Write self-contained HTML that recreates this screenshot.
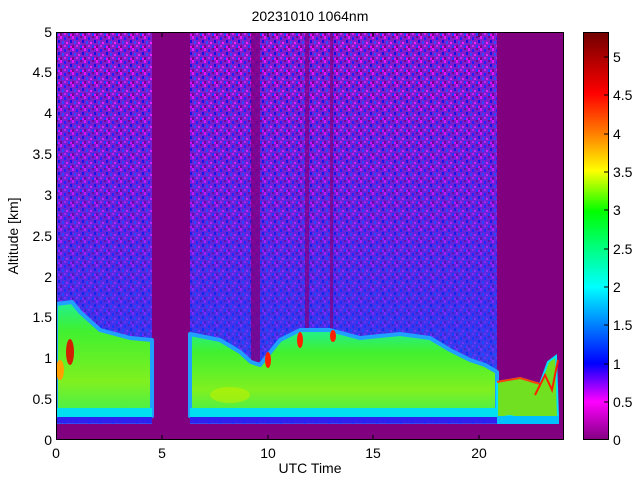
<!DOCTYPE html>
<html><head><style>
html,body{margin:0;padding:0;background:#fff;width:640px;height:480px;overflow:hidden}
</style></head><body>
<svg width="640" height="480" xmlns="http://www.w3.org/2000/svg" font-family="Liberation Sans, sans-serif">
<defs>
<pattern id="nz" width="12" height="12" patternUnits="userSpaceOnUse">
<rect width="12" height="12" fill="#8a1ec8"/>
<rect x="0" y="0" width="2" height="3" fill="#ff10ff"/>
<rect x="4" y="1" width="2" height="3" fill="#2020ff"/>
<rect x="8" y="0" width="2" height="2" fill="#800080"/>
<rect x="2" y="5" width="2" height="3" fill="#3050ff"/>
<rect x="6" y="6" width="2" height="2" fill="#ff20ff"/>
<rect x="10" y="4" width="2" height="3" fill="#1010e0"/>
<rect x="0" y="9" width="2" height="3" fill="#800080"/>
<rect x="4" y="9" width="2" height="2" fill="#e020f0"/>
<rect x="8" y="9" width="2" height="3" fill="#2040ff"/>
<rect x="10" y="10" width="2" height="2" fill="#ff00ff"/>
</pattern>
<linearGradient id="bl" x1="0" y1="0" x2="0" y2="1">
<stop offset="0" stop-color="#2020ff" stop-opacity="0.05"/>
<stop offset="0.45" stop-color="#2030ff" stop-opacity="0.3"/>
<stop offset="0.75" stop-color="#1040ff" stop-opacity="0.6"/>
<stop offset="1" stop-color="#1060ff" stop-opacity="0.7"/>
</linearGradient>
<linearGradient id="cl" x1="0" y1="0" x2="0" y2="1">
<stop offset="0" stop-color="#20f090"/>
<stop offset="0.25" stop-color="#40f030"/>
<stop offset="0.7" stop-color="#80f020"/>
<stop offset="1" stop-color="#40f050"/>
</linearGradient>
<linearGradient id="cb" x1="0" y1="1" x2="0" y2="0">
<stop offset="0" stop-color="#800080"/>
<stop offset="0.094" stop-color="#ff00ff"/>
<stop offset="0.188" stop-color="#0000ff"/>
<stop offset="0.375" stop-color="#00ffff"/>
<stop offset="0.47" stop-color="#00ff80"/>
<stop offset="0.56" stop-color="#00ff00"/>
<stop offset="0.66" stop-color="#ffff00"/>
<stop offset="0.75" stop-color="#ff8000"/>
<stop offset="0.85" stop-color="#ff0000"/>
<stop offset="1" stop-color="#700000"/>
</linearGradient>
<clipPath id="pa"><rect x="56" y="32" width="508" height="408"/></clipPath>
</defs>
<g clip-path="url(#pa)">
<rect x="56" y="32" width="508" height="408" fill="#800080"/>
<rect x="56" y="32" width="96" height="392" fill="url(#nz)"/>
<rect x="190" y="32" width="307" height="392" fill="url(#nz)"/>
<rect x="56" y="32" width="96" height="392" fill="url(#bl)"/>
<rect x="190" y="32" width="307" height="392" fill="url(#bl)"/>
<rect x="152" y="32" width="38" height="408" fill="#800080"/>
<rect x="251" y="32" width="9" height="330" fill="#800080" opacity="0.8"/>
<rect x="305" y="32" width="4" height="300" fill="#800080" opacity="0.7"/>
<rect x="330" y="32" width="3" height="300" fill="#800080" opacity="0.7"/>
<g stroke="#20a0ff" stroke-width="4" stroke-linejoin="round">
<polygon fill="url(#cl)" points="56,304 72,302 80,312 100,330 130,338 152,340 152,416 56,416"/>
<polygon fill="url(#cl)" points="190,334 220,340 240,352 251,362 260,365 280,340 300,330 330,330 360,338 400,334 430,338 450,350 470,360 485,365 497,372 497,416 190,416"/>
</g>
<polygon fill="#70e020" stroke="#00e0ff" stroke-width="2" points="497,382 520,378 540,384 548,362 556,356 558,418 528,420 510,416 497,418"/>
<rect x="56" y="408" width="96" height="9" fill="#00e0f0"/>
<rect x="190" y="408" width="307" height="9" fill="#00e0f0"/>
<rect x="56" y="417" width="96" height="6" fill="#3020f0"/>
<rect x="190" y="417" width="307" height="6" fill="#3020f0"/>
<rect x="497" y="416" width="62" height="8" fill="#00c0ff"/>
<ellipse cx="70" cy="352" rx="4" ry="13" fill="#d02000"/>
<ellipse cx="60" cy="370" rx="4" ry="10" fill="#ffa000"/>
<ellipse cx="230" cy="395" rx="20" ry="8" fill="#c0f000" opacity="0.6"/>
<ellipse cx="268" cy="360" rx="3" ry="8" fill="#ff2000"/>
<ellipse cx="300" cy="340" rx="3" ry="8" fill="#ff2000"/>
<ellipse cx="333" cy="336" rx="3" ry="6" fill="#ff2000"/>
<path d="M497 382 L520 378 L540 384" stroke="#ff4000" stroke-width="2" fill="none"/>
<path d="M535 395 L545 375 L552 390 L558 360" stroke="#ff2000" stroke-width="2" fill="none"/>
<rect x="56" y="424" width="508" height="16" fill="#800080"/>
</g>
<rect x="56.5" y="32.5" width="507" height="407" fill="none" stroke="#000" stroke-width="1"/>
<g stroke="#000" stroke-width="1">
<line x1="162" y1="440" x2="162" y2="435"/><line x1="268" y1="440" x2="268" y2="435"/><line x1="373" y1="440" x2="373" y2="435"/><line x1="479" y1="440" x2="479" y2="435"/>
<line x1="162" y1="32" x2="162" y2="37"/><line x1="268" y1="32" x2="268" y2="37"/><line x1="373" y1="32" x2="373" y2="37"/><line x1="479" y1="32" x2="479" y2="37"/>
</g>
<g font-size="14" fill="#000" text-anchor="end">
<text x="52" y="445">0</text><text x="52" y="404">0.5</text><text x="52" y="363">1</text><text x="52" y="322">1.5</text><text x="52" y="282">2</text><text x="52" y="241">2.5</text><text x="52" y="200">3</text><text x="52" y="159">3.5</text><text x="52" y="118">4</text><text x="52" y="77">4.5</text><text x="52" y="37">5</text>
</g>
<g font-size="14" fill="#000" text-anchor="middle">
<text x="56" y="458">0</text><text x="162" y="458">5</text><text x="268" y="458">10</text><text x="373" y="458">15</text><text x="479" y="458">20</text>
<text x="310" y="473">UTC Time</text>
<text x="310" y="21">20231010 1064nm</text>
<text transform="translate(18,236) rotate(-90)">Altitude [km]</text>
</g>
<rect x="583" y="32" width="26" height="408" fill="url(#cb)"/>
<rect x="583.5" y="32.5" width="25" height="407" fill="none" stroke="#000"/>
<g stroke="#000">
<line x1="604" y1="57" x2="609" y2="57"/><line x1="604" y1="95" x2="609" y2="95"/><line x1="604" y1="134" x2="609" y2="134"/><line x1="604" y1="172" x2="609" y2="172"/><line x1="604" y1="210" x2="609" y2="210"/><line x1="604" y1="249" x2="609" y2="249"/><line x1="604" y1="287" x2="609" y2="287"/><line x1="604" y1="325" x2="609" y2="325"/><line x1="604" y1="364" x2="609" y2="364"/><line x1="604" y1="402" x2="609" y2="402"/>
</g>
<g font-size="14" fill="#000">
<text x="613" y="445">0</text><text x="613" y="407">0.5</text><text x="613" y="369">1</text><text x="613" y="330">1.5</text><text x="613" y="292">2</text><text x="613" y="254">2.5</text><text x="613" y="215">3</text><text x="613" y="177">3.5</text><text x="613" y="139">4</text><text x="613" y="100">4.5</text><text x="613" y="62">5</text>
</g>
</svg>
</body></html>
